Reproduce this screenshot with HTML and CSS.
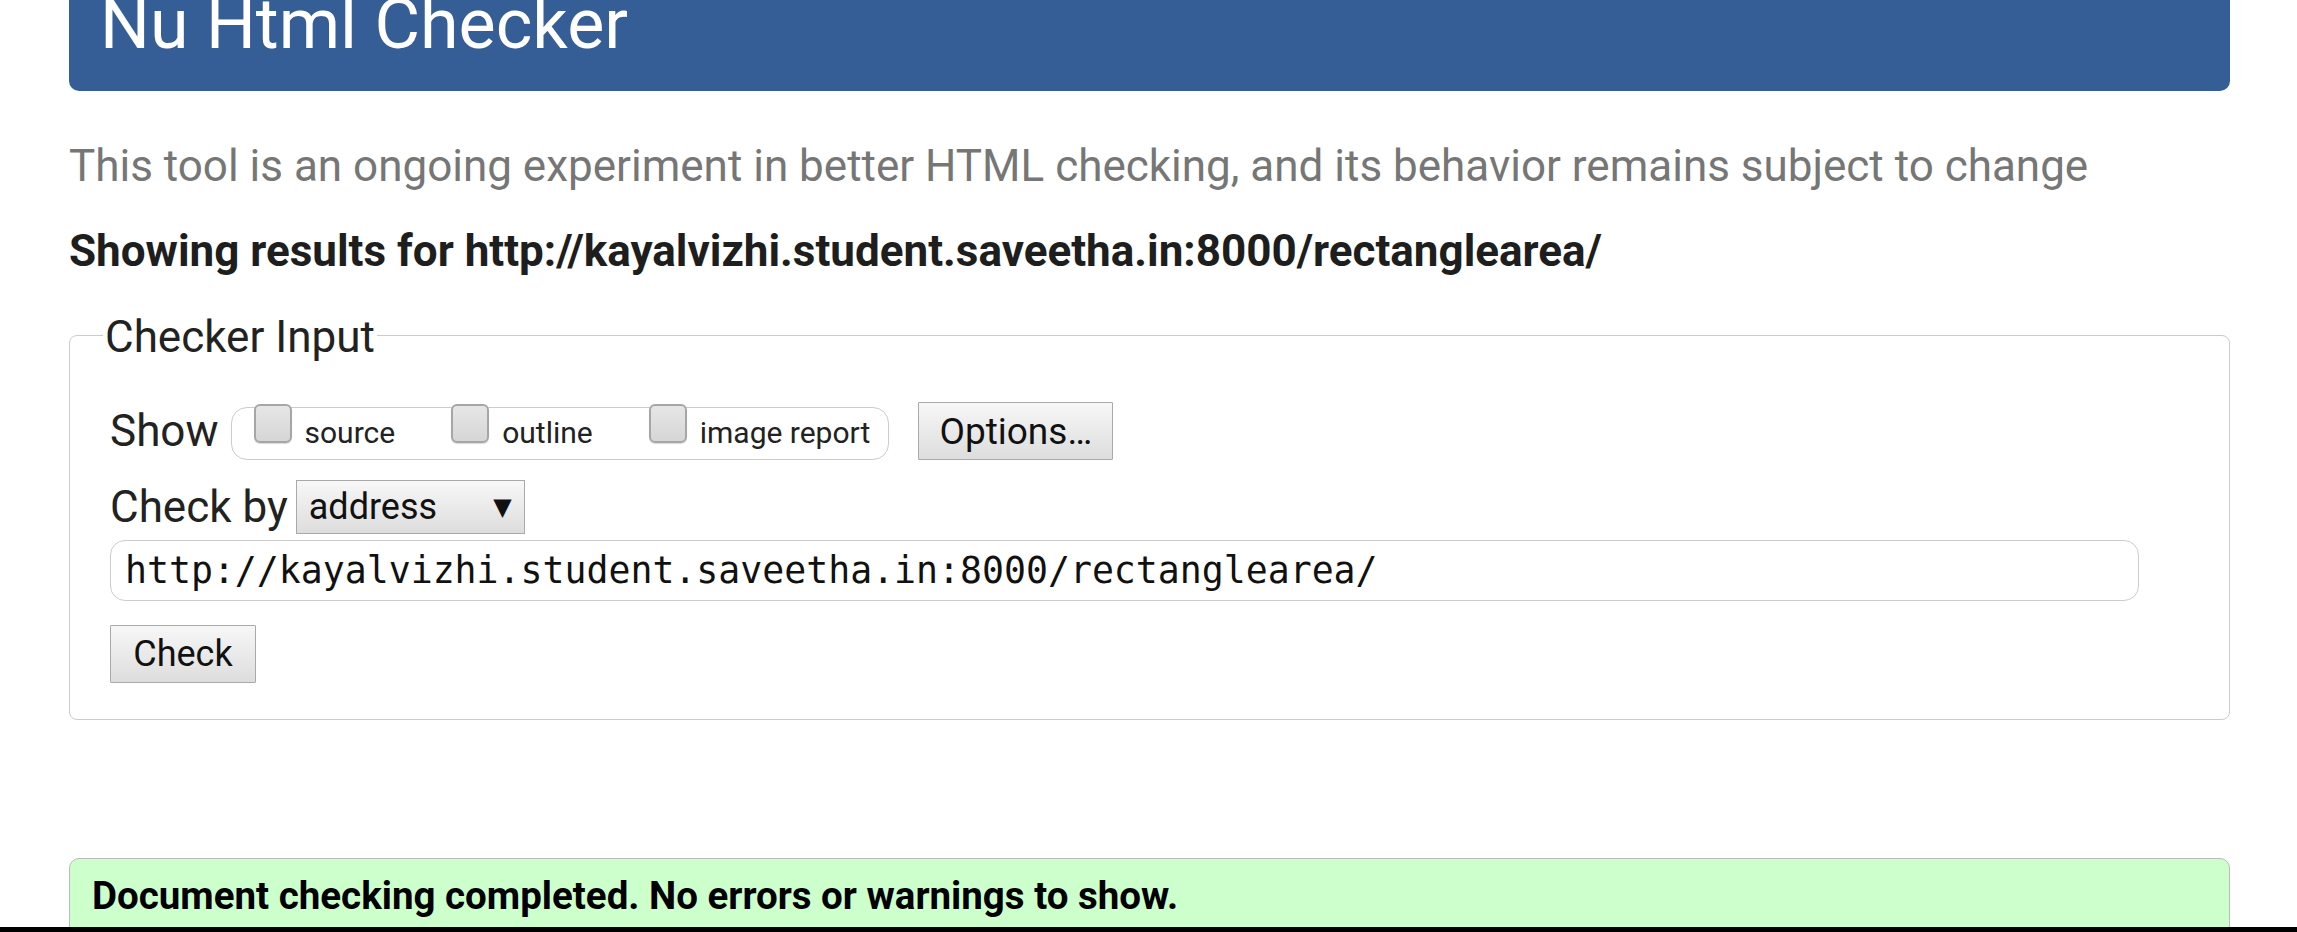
FILE: index.html
```html
<!DOCTYPE html>
<html lang="en">
<head>
<meta charset="utf-8">
<title>Nu Html Checker</title>
<link rel="stylesheet" href="styles.css">
</head>
<body>
<main class="page">
  <header class="banner"><h1 class="banner-title">Nu Html Checker</h1></header>
  <p class="intro">This tool is an ongoing experiment in better HTML checking, and its behavior remains subject to change</p>
  <p class="showing">Showing results for http://kayalvizhi.student.saveetha.in:8000/rectanglearea/</p>
  <form class="checker-form">
    <fieldset class="checker">
      <legend class="checker-legend">Checker Input</legend>
      <div class="checker-body">
        <div class="row row-show">
          <span class="row-label">Show</span>
          <span class="opt-group">
            <label class="opt"><span class="cb"></span><span class="opt-text">source</span></label>
            <label class="opt"><span class="cb"></span><span class="opt-text">outline</span></label>
            <label class="opt"><span class="cb"></span><span class="opt-text">image report</span></label>
          </span>
          <button type="button" class="btn btn-options">Options…</button>
        </div>
        <div class="row row-by">
          <span class="row-label">Check by</span>
          <span class="select"><span class="select-value">address</span><span class="select-arrow">▼</span></span>
        </div>
        <div class="url-input">http://kayalvizhi.student.saveetha.in:8000/rectanglearea/</div>
        <div class="row row-submit">
          <button type="button" class="btn btn-check">Check</button>
        </div>
      </div>
    </fieldset>
  </form>
  <div class="success">
    <p class="success-text">Document checking completed. No errors or warnings to show.</p>
  </div>
</main>
<div class="nav-edge"></div>
</body>
</html>
```

FILE: styles.css
```css
html, body {
  margin: 0;
  padding: 0;
  height: 100%;
}

body {
  display: flex;
  flex-direction: column;
  overflow: hidden;
  background: #ffffff;
  font-family: Roboto, "Noto Sans", sans-serif;
  color: #222222;
}

.page {
  flex: 1;
  overflow: hidden;
  padding: 0 67px 0 69px;
}

.banner {
  background: #365e96;
  border-radius: 0 0 10px 10px;
  padding: 0 0 43px 31px;
}

.banner-title {
  margin: 0;
  font-size: 70px;
  font-weight: 400;
  line-height: 48px;
  color: #ffffff;
}

.intro {
  margin: 48px 0 0;
  font-size: 44px;
  line-height: 54px;
  color: #767676;
}

.showing {
  margin: 31px 0 0;
  font-size: 44px;
  line-height: 54px;
  font-weight: 700;
  color: #1e1e1e;
}

.checker-form {
  margin: 0;
}

.checker {
  margin: 32px 0 0;
  padding: 0 90px 0 0;
  border: 1px solid #cccccc;
  border-radius: 8px;
  min-width: 0;
}

.checker-legend {
  margin-left: 33px;
  padding: 4px 2px 0;
  font-size: 44px;
  line-height: 46px;
  color: #222222;
}

.checker-body {
  display: flex;
  flex-direction: column;
  align-items: flex-start;
  padding: 42px 0 36px 40px;
}

.row {
  display: flex;
  align-items: center;
}

.row-label {
  font-size: 44px;
  line-height: 44px;
  color: #222222;
}

.row-show {
  gap: 12px;
}

.opt-group {
  display: flex;
  align-items: flex-start;
  height: 51px;
  margin-top: 4px;
  padding: 0 18px 0 22px;
  border: 1px solid #cccccc;
  border-radius: 16px;
  gap: 56px;
}

.opt {
  display: flex;
  align-items: baseline;
  gap: 13px;
  margin-top: -4px;
}

.cb {
  display: inline-block;
  width: 34px;
  height: 35px;
  border: 2px solid #a6a6a6;
  border-radius: 6px;
  background: linear-gradient(#e6e6e6, #d6d6d6);
  box-shadow: 0 1px 1px rgba(0, 0, 0, 0.15);
  margin-bottom: 2px;
}

.opt-text {
  font-size: 30px;
  line-height: 46px;
  color: #222222;
}

.btn {
  font-family: Roboto, "Noto Sans", sans-serif;
  color: #111111;
  background: linear-gradient(#f7f7f7, #dddddd);
  border: 1px solid #a9a9a9;
  border-radius: 1px;
  padding: 0 16px;
  height: 58px;
  font-size: 36px;
}

.btn-options {
  margin-left: 17px;
  width: 195px;
  font-size: 37px;
}

.row-by {
  margin-top: 20px;
  gap: 8px;
}

.select {
  display: flex;
  align-items: center;
  justify-content: space-between;
  width: 203px;
  height: 52px;
  padding: 0 12px 0 12px;
  border: 1px solid #a9a9a9;
  background: linear-gradient(#f7f7f7, #dddddd);
  font-size: 36px;
  color: #111111;
}

.select-arrow {
  font-size: 24px;
  font-family: "DejaVu Sans", sans-serif;
}

.url-input {
  align-self: stretch;
  margin-top: 6px;
  height: 61px;
  box-sizing: border-box;
  display: flex;
  align-items: center;
  padding: 0 14px;
  border: 1px solid #cccccc;
  border-radius: 15px;
  font-family: "DejaVu Sans Mono", monospace;
  font-size: 36.5px;
  color: #111111;
}

.row-submit {
  margin-top: 24px;
}

.btn-check {
  width: 146px;
  padding: 0 10px;
  font-size: 36px;
}

.success {
  margin-top: 138px;
  background: #ccffcc;
  border: 1px solid #bbbbbb;
  border-radius: 10px;
  padding: 0 22px;
  height: 200px;
}

.success-text {
  margin: 14px 0 0;
  font-size: 38.5px;
  line-height: 46px;
  font-weight: 700;
  color: #000000;
}

.nav-edge {
  flex: 0 0 5px;
  background: #000000;
}
```
